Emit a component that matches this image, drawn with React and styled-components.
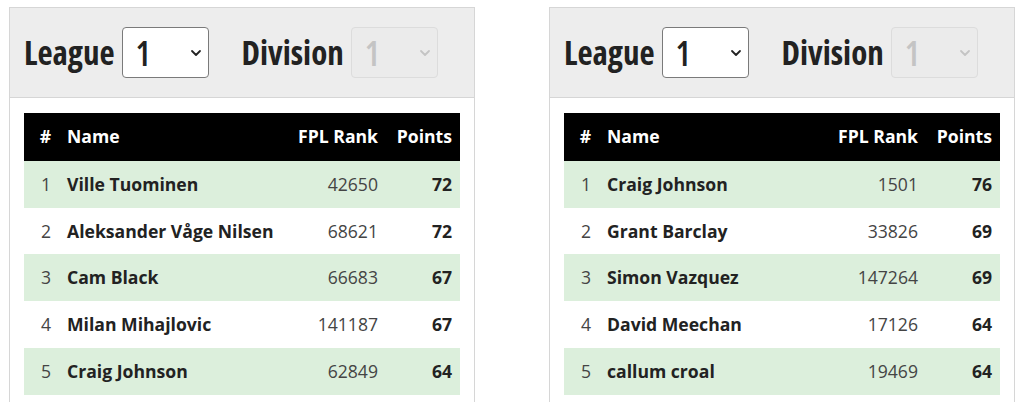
import React from "react";
import styled, { createGlobalStyle } from "styled-components";

const GlobalStyle = createGlobalStyle`
  html, body {
    margin: 0;
    padding: 0;
    background: #fff;
    overflow: hidden;
  }
  body {
    font-family: "Open Sans", "Liberation Sans", sans-serif;
    color: #333;
  }
`;

const Page = styled.div`
  display: flex;
  gap: 74px;
  padding: 7px 9px 0;
`;

const Panel = styled.section`
  width: 466px;
  box-sizing: border-box;
  border: 1px solid #d6d6d6;
  background: #fff;
`;

const Header = styled.div`
  display: flex;
  align-items: center;
  height: 89px;
  padding: 0 14px;
  background: #ededed;
  border-bottom: 1px solid #d6d6d6;
`;

const Label = styled.span`
  font-family: "Open Sans", sans-serif;
  font-stretch: 75%;
  font-weight: 700;
  font-size: 33px;
  color: #222;
  margin-right: 7px;
  margin-left: ${(p) => (p.spaced ? "33px" : "0")};
`;

const SelectBox = styled.div`
  display: flex;
  align-items: center;
  justify-content: space-between;
  box-sizing: border-box;
  width: 87px;
  height: 51px;
  padding: 0 6px 0 13px;
  border: 1px solid ${(p) => (p.disabled ? "#dcdcdc" : "#7a7a7a")};
  border-radius: 4px;
  background: ${(p) => (p.disabled ? "#ebebeb" : "#fff")};
  color: ${(p) => (p.disabled ? "#c4c4c4" : "#222")};
`;

const SelectValue = styled.span`
  font-stretch: 75%;
  font-size: 34px;
  font-weight: 600;
  line-height: 1;
`;

const Body = styled.div`
  padding: 15px 14px 14px;
`;

const Table = styled.table`
  width: 100%;
  table-layout: fixed;
  border-collapse: collapse;
  font-size: 17.6px;
`;

const HeadCell = styled.th`
  box-sizing: border-box;
  background: #000;
  color: #fff;
  font-weight: 700;
  padding: 11px 8px 13px;
  line-height: 24px;
  text-align: ${(p) => p.align || "left"};
  width: ${(p) => p.w || "auto"};
  white-space: nowrap;
`;

const Row = styled.tr`
  background: ${(p) => (p.striped ? "#dcefdc" : "#fff")};
`;

const Cell = styled.td`
  padding: 11px 8px;
  line-height: 24.7px;
  text-align: ${(p) => p.align || "left"};
  font-weight: ${(p) => (p.bold ? 700 : 400)};
  color: ${(p) => (p.bold ? "#222" : "#444")};
  white-space: nowrap;
`;

function Chevron() {
  return (
    <svg width="12" height="8" viewBox="0 0 12 8" fill="none">
      <path d="M2 2l4 4 4-4" stroke="currentColor" strokeWidth="1.8" strokeLinecap="round" strokeLinejoin="round" />
    </svg>
  );
}

const leagues = [
  [
    ["Ville Tuominen", "42650", "72"],
    ["Aleksander Våge Nilsen", "68621", "72"],
    ["Cam Black", "66683", "67"],
    ["Milan Mihajlovic", "141187", "67"],
    ["Craig Johnson", "62849", "64"],
  ],
  [
    ["Craig Johnson", "1501", "76"],
    ["Grant Barclay", "33826", "69"],
    ["Simon Vazquez", "147264", "69"],
    ["David Meechan", "17126", "64"],
    ["callum croal", "19469", "64"],
  ],
];

function LeaguePanel({ rows }) {
  return (
    <Panel>
      <Header>
        <Label>League</Label>
        <SelectBox>
          <SelectValue>1</SelectValue>
          <Chevron />
        </SelectBox>
        <Label spaced>Division</Label>
        <SelectBox disabled>
          <SelectValue>1</SelectValue>
          <Chevron />
        </SelectBox>
      </Header>
      <Body>
        <Table>
          <thead>
            <tr>
              <HeadCell align="right" w="35px">#</HeadCell>
              <HeadCell>Name</HeadCell>
              <HeadCell align="right" w="103px">FPL Rank</HeadCell>
              <HeadCell align="right" w="74px">Points</HeadCell>
            </tr>
          </thead>
          <tbody>
            {rows.map((r, i) => (
              <Row key={i} striped={i % 2 === 0}>
                <Cell align="right">{i + 1}</Cell>
                <Cell bold>{r[0]}</Cell>
                <Cell align="right">{r[1]}</Cell>
                <Cell align="right" bold>{r[2]}</Cell>
              </Row>
            ))}
          </tbody>
        </Table>
      </Body>
    </Panel>
  );
}

export default function App() {
  return (
    <>
      <GlobalStyle />
      <Page>
        {leagues.map((rows, i) => (
          <LeaguePanel key={i} rows={rows} />
        ))}
      </Page>
    </>
  );
}
